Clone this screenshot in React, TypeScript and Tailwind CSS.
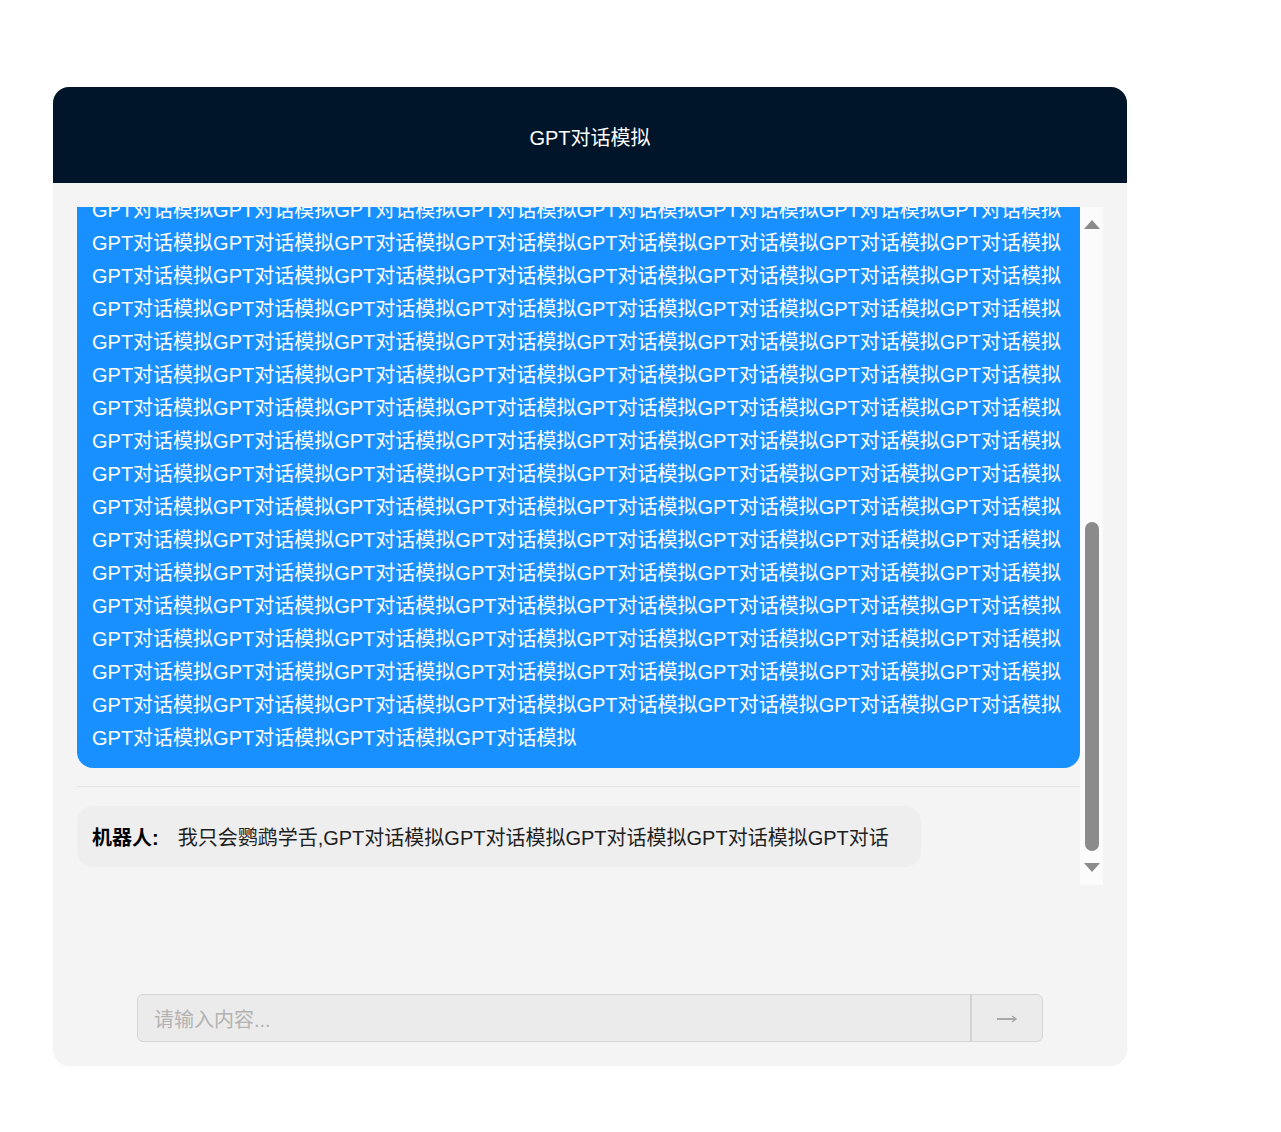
import React from "react";

const UNIT = "GPT对话模拟";

export default function App() {
  const longText = UNIT.repeat(8 * 20 + 4);
  const robotText = "我只会鹦鹉学舌," + UNIT.repeat(4) + "GPT对话";
  return (
    <div className="min-h-screen bg-white pt-[87px] pl-[53px] font-[family-name:Liberation_Sans,Noto_Sans_CJK_SC,sans-serif]">
      <div className="w-[1074px] overflow-hidden rounded-[16px] bg-[#f4f4f4]">
        <div className="flex h-[96px] items-center justify-center bg-[#001529] pt-[6px] text-[20px] text-white">
          GPT对话模拟
        </div>
        <div className="px-[24px] py-[24px]">
          <div className="flex h-[678px]">
            <div className="flex min-w-0 flex-1 flex-col justify-end overflow-hidden">
              <div className="shrink-0 rounded-[16px] bg-[#1890ff] px-[15px] pb-[13px] pt-[15px] text-[20px] leading-[33px] text-white break-all">
                {longText}
              </div>
              <div className="mt-[18px] h-px shrink-0 bg-[#e4e4e4]" />
              <div className="mt-[19px] mb-[18px] shrink-0">
                <div className="w-[844px] rounded-[16px] bg-[#eeeeee] pl-[15px] pr-[15px] pt-[16px] pb-[12px] text-[20px] leading-[33px] text-[#1f1f1f]">
                  <span className="font-bold text-black">机器人:</span>
                  <span className="ml-[19px]">{robotText}</span>
                </div>
              </div>
            </div>
            <div className="flex w-[23px] shrink-0 flex-col items-center bg-[#fbfbfb]">
              <svg className="mt-[13px]" width="16" height="9" viewBox="0 0 16 9">
                <polygon points="8,0 16,9 0,9" fill="#8b8b8b" />
              </svg>
              <div className="mt-[293px] h-[329px] w-[14px] rounded-full bg-[#8b8b8b]" />
              <svg className="mt-[12px]" width="16" height="9" viewBox="0 0 16 9">
                <polygon points="0,0 16,0 8,9" fill="#8b8b8b" />
              </svg>
            </div>
          </div>
          <div className="mt-[109px] flex justify-center">
            <div className="flex h-[48px] w-[906px] overflow-hidden rounded-[6px] border border-[#d6d6d6] bg-[#ebebeb]">
              <input
                className="min-w-0 flex-1 bg-transparent px-[16px] pt-[4px] text-[20px] text-[#333] outline-none placeholder:text-[#b3b3b3]"
                placeholder="请输入内容..."
              />
              <button className="flex w-[72px] items-center justify-center border-l-2 border-[#d2d2d2] pt-[2px]">
                <svg width="22" height="10" viewBox="0 0 22 10">
                  <line x1="1" y1="5" x2="20" y2="5" stroke="#a8a8a8" strokeWidth="2" />
                  <polyline points="16,2 20,5 16,8" fill="none" stroke="#a8a8a8" strokeWidth="1.5" />
                </svg>
              </button>
            </div>
          </div>
        </div>
      </div>
    </div>
  );
}
